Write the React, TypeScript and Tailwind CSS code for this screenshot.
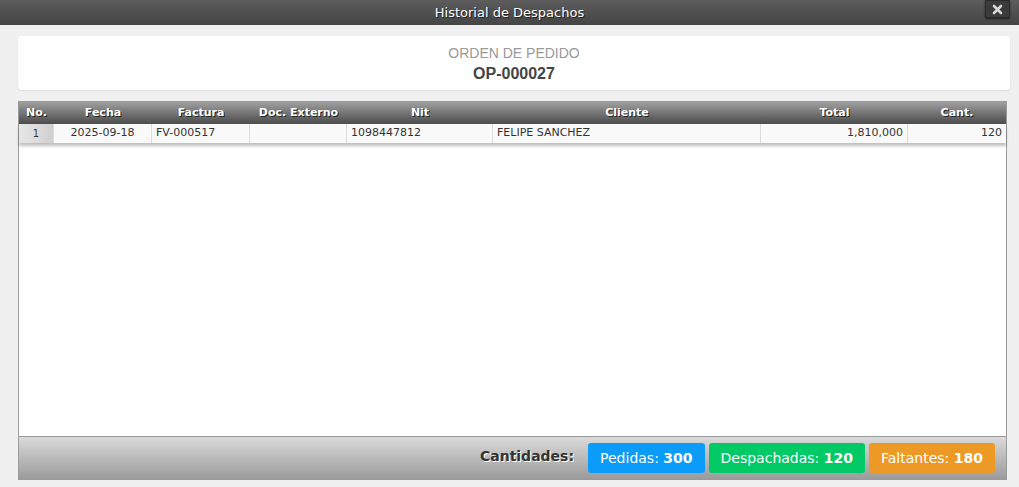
import React from "react";

const cols = [
  { name: "No.", w: 35 },
  { name: "Fecha", w: 98 },
  { name: "Factura", w: 98 },
  { name: "Doc. Externo", w: 97 },
  { name: "Nit", w: 146 },
  { name: "Cliente", w: 268 },
  { name: "Total", w: 147 },
  { name: "Cant.", w: 98 },
];

export default function App() {
  const font = { fontFamily: '"DejaVu Sans", Verdana, sans-serif' };
  return (
    <div className="w-[1019px] h-[487px] bg-[#f0f0f0] flex flex-col overflow-hidden" style={font}>
      <div className="relative h-[25px] shrink-0 bg-gradient-to-b from-[#5c5c5c] to-[#444444] flex items-center justify-center">
        <span className="text-white text-[13px] [text-shadow:1px_1px_0_#222]">Historial de Despachos</span>
        <div className="absolute right-[9px] top-0 w-[25px] h-[18px] bg-[#3b3b3b] border border-[#2a2a2a] shadow-[0_1px_2px_rgba(0,0,0,0.6)] flex items-center justify-center rounded-b-[2px]">
          <svg width="11" height="11" viewBox="0 0 11 11">
            <path d="M2 2 L9 9 M9 2 L2 9" stroke="#d8d8d8" strokeWidth="2.6" strokeLinecap="round" />
          </svg>
        </div>
      </div>
      <div className="flex-1 flex flex-col pl-[18px] pr-[9px] pt-[11px] pb-[7px]">
        <div className="h-[54px] bg-white rounded-[4px] shadow-[0_1px_2px_rgba(0,0,0,0.08)] flex flex-col items-center justify-center pt-[2px]" style={{ fontFamily: '"Liberation Sans", Arial, sans-serif' }}>
          <div className="text-[14px] leading-[16px] text-[#999999]">ORDEN DE PEDIDO</div>
          <div className="text-[16px] leading-[20px] font-bold text-[#444444] mt-[3px]">OP-000027</div>
        </div>
        <div className="mt-[11px] w-[989px] flex-1 flex flex-col border border-[#9a9a9a] bg-white">
          <div className="flex h-[22px] bg-gradient-to-b from-[#a0a0a0] to-[#4c4c4c]">
            {cols.map((c) => (
              <div key={c.name} style={{ width: c.w }} className="shrink-0 flex items-center justify-center text-white font-bold text-[11px] [text-shadow:1px_1px_0_#222]">
                {c.name}
              </div>
            ))}
          </div>
          <div className="flex h-[19px] bg-[#f9f9f9] text-[11px] text-[#333] shadow-[0_3px_3px_rgba(0,0,0,0.25)] relative">
            <div style={{ width: 35 }} className="shrink-0 flex items-center justify-center bg-gradient-to-r from-[#e6e6e6] via-[#dcdcdc] to-[#cfcfcf] text-[10px] border-r border-[#ddd]">1</div>
            <div style={{ width: 98 }} className="shrink-0 flex items-center justify-center border-r border-[#ddd]">2025-09-18</div>
            <div style={{ width: 98 }} className="shrink-0 flex items-center px-[4px] border-r border-[#ddd]">FV-000517</div>
            <div style={{ width: 97 }} className="shrink-0 flex items-center px-[4px] border-r border-[#ddd]"></div>
            <div style={{ width: 146 }} className="shrink-0 flex items-center px-[4px] border-r border-[#ddd]">1098447812</div>
            <div style={{ width: 268 }} className="shrink-0 flex items-center px-[4px] border-r border-[#ddd]">FELIPE SANCHEZ</div>
            <div style={{ width: 147 }} className="shrink-0 flex items-center justify-end px-[4px] border-r border-[#ddd]">1,810,000</div>
            <div style={{ width: 98 }} className="shrink-0 flex items-center justify-end px-[4px]">120</div>
          </div>
          <div className="flex-1"></div>
          <div className="h-[43px] border-t border-[#9a9a9a] bg-gradient-to-b from-[#dadada] to-[#9b9b9b] flex items-center justify-end pr-[11px] gap-[4px]">
            <span className="font-bold text-[14px] text-[#333] mr-[10px] mb-[4px] [text-shadow:1px_1px_0_#fff]">Cantidades:</span>
            <div className="h-[30px] px-[12px] rounded-[3px] bg-[#0a9cf8] text-white text-[14px] flex items-center">Pedidas:&nbsp;<b>300</b></div>
            <div className="h-[30px] px-[12px] rounded-[3px] bg-[#00c966] text-white text-[14px] flex items-center">Despachadas:&nbsp;<b>120</b></div>
            <div className="h-[30px] px-[12px] rounded-[3px] bg-[#ec9a25] text-white text-[14px] flex items-center">Faltantes:&nbsp;<b>180</b></div>
          </div>
        </div>
      </div>
    </div>
  );
}
